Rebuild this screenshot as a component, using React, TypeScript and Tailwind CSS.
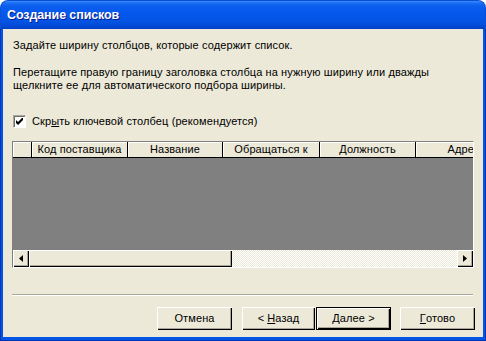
import React from "react";

function ArrowLeft() {
  return (
    <svg width="4" height="7" viewBox="0 0 4 7" className="block">
      <path d="M4 0 L0 3.5 L4 7 Z" fill="#000" />
    </svg>
  );
}
function ArrowRight() {
  return (
    <svg width="4" height="7" viewBox="0 0 4 7" className="block">
      <path d="M0 0 L4 3.5 L0 7 Z" fill="#000" />
    </svg>
  );
}

const raised =
  "bg-[#ECE9D8] shadow-[inset_1px_1px_#ffffff,inset_-1px_-1px_#000000,inset_-2px_-2px_#ACA899]";

function Header({ w, children }: { w: number; children?: React.ReactNode }) {
  const widths: Record<number, string> = {
    19: "w-[19px]",
    95: "w-[95px]",
    96: "w-[96px]",
    97: "w-[97px]",
  };
  return (
    <div
      className={`${widths[w]} shrink-0 h-full flex items-center justify-center whitespace-nowrap overflow-hidden border-r border-[#000] shadow-[inset_1px_1px_#ffffff]`}
    >
      {children}
    </div>
  );
}

export default function App() {
  return (
    <div className="w-[486px] h-[341px] bg-white font-['Liberation_Sans',Arial,sans-serif] text-[11px] leading-[13px] tracking-[0.1px] text-black select-none">
      <div className="flex flex-col h-full">
        <div className="h-[29px] shrink-0 rounded-t-[8px] bg-[linear-gradient(180deg,#3D8FFA_0px,#1A6FF5_2px,#0B5EED_5px,#0558EC_12px,#0454E4_20px,#034AD6_25px,#0240C2_28px)] border-t border-x border-[#0B4FD6] flex items-center pl-[6px]">
          <span className="text-white font-bold text-[12.5px] leading-[16px] tracking-[-0.1px] [text-shadow:1px_1px_#0A1A8C]">
            Создание списков
          </span>
        </div>
        <div className="flex-1 flex flex-col bg-[#0055E5] border-x border-b border-[#0034B8] px-[2px] pb-[3px]">
          <div className="flex-1 flex flex-col bg-[#ECE9D8] pl-[9px]">
            <div className="pl-[1px] mt-[10px]">
              Задайте ширину столбцов, которые содержит список.
            </div>
            <div className="pl-[1px] mt-[14px]">
              Перетащите правую границу заголовка столбца на нужную ширину или дважды
              <br />
              щелкните ее для автоматического подбора ширины.
            </div>
            <div className="flex items-center mt-[23px] pl-[1px] h-[13px]">
              <div className="w-[13px] h-[13px] bg-white border border-t-[#ACA899] border-l-[#ACA899] border-b-white border-r-white shadow-[inset_1px_1px_#716F64] flex items-center justify-center">
                <svg width="7" height="7" viewBox="0 0 7 7" className="block">
                  <path d="M0 2 L0 5 L2 7 L7 2 L7 -1 L2 4 Z" fill="#000" />
                </svg>
              </div>
              <span className="ml-[6px]">
                Скр<span className="underline underline-offset-[1px]">ы</span>ть ключевой столбец (рекомендуется)
              </span>
            </div>
            <div className="mt-[13px] w-[462px] h-[127px] flex flex-col border border-t-[#808080] border-l-[#808080] border-b-white border-r-white overflow-hidden">
              <div className="h-[16px] shrink-0 flex bg-[#ECE9D8] border-b border-[#000] overflow-hidden">
                <Header w={19} />
                <Header w={96}>Код поставщика</Header>
                <Header w={95}>Название</Header>
                <Header w={97}>Обращаться к</Header>
                <Header w={96}>Должность</Header>
                <Header w={96}>Адрес</Header>
              </div>
              <div className="flex-1 bg-[#808080]" />
              <div className="h-[17px] shrink-0 flex">
                <div className={`${raised} w-[16px] h-[17px] shrink-0 flex items-center justify-center`}>
                  <ArrowLeft />
                </div>
                <div className={`${raised} w-[203px] h-[17px] shrink-0`} />
                <div className="flex-1 h-[17px] bg-[repeating-conic-gradient(#ECE9D8_0_25%,#ffffff_0_50%)] bg-[length:2px_2px]" />
                <div className={`${raised} w-[16px] h-[17px] shrink-0 flex items-center justify-center`}>
                  <ArrowRight />
                </div>
              </div>
            </div>
            <div className="mt-[26px] w-[461px] h-[2px] border-t border-[#ACA899] border-b border-b-white" />
            <div className="mt-[11px] flex items-center h-[23px]">
              <div className="ml-[145px] w-[75px] h-[23px]">
                <div className={`${raised} w-full h-full flex items-center justify-center`}>Отмена</div>
              </div>
              <div className="ml-[10px] w-[73px] h-[23px]">
                <div className={`${raised} w-full h-full flex items-center justify-center`}>
                  &lt; <span className="underline underline-offset-[1px] ml-[3px]">Н</span>азад
                </div>
              </div>
              <div className="ml-[1px] w-[75px] h-[23px] border border-black">
                <div className={`${raised} w-full h-full flex items-center justify-center`}>
                  <span className="underline underline-offset-[1px]">Д</span>алее &gt;
                </div>
              </div>
              <div className="ml-[9px] w-[75px] h-[23px]">
                <div className={`${raised} w-full h-full flex items-center justify-center`}>
                  <span className="underline underline-offset-[1px]">Г</span>отово
                </div>
              </div>
            </div>
          </div>
        </div>
      </div>
    </div>
  );
}
